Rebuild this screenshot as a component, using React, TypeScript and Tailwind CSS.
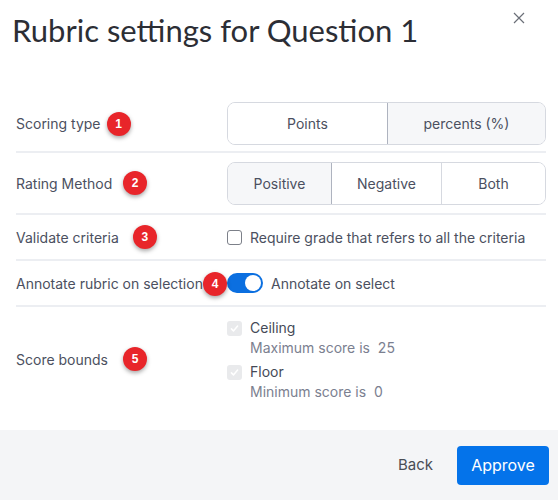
import React from "react";

function Badge({ n, className = "" }: { n: number; className?: string }) {
  return (
    <span
      className={`inline-flex h-[24px] w-[24px] items-center justify-center rounded-full bg-[#e8252a] text-[12px] font-bold text-white shadow-[0_2px_4px_rgba(0,0,0,0.35)] ${className}`}
      style={{ fontFamily: "'Liberation Sans', Arial, sans-serif" }}
    >
      {n}
    </span>
  );
}

function CheckIcon() {
  return (
    <svg viewBox="0 0 16 16" className="h-[11px] w-[11px]" fill="none" stroke="white" strokeWidth="2.2" strokeLinecap="round" strokeLinejoin="round">
      <path d="M3.5 8.5l3 3 6-7" />
    </svg>
  );
}

export default function App() {
  return (
    <div className="relative h-[500px] w-[558px] bg-white" style={{ fontFamily: "Inter, 'Noto Sans', sans-serif" }}>
      <div className="px-3 pt-[10px]">
        <h1 className="text-[31px] leading-[40px] text-[#2c2e35]" style={{ fontFamily: "Lato, Inter, sans-serif" }}>
          Rubric settings for Question 1
        </h1>
      </div>
      <button className="absolute right-[33px] top-[12px] text-[#6b6f78]" aria-label="close">
        <svg viewBox="0 0 12 12" className="h-[12px] w-[12px]" stroke="currentColor" strokeWidth="1.2">
          <path d="M1 1l10 10M11 1L1 11" />
        </svg>
      </button>

      <div className="mt-[46px] pl-4 pr-3 text-[14px] text-[#4b5060]">
        {/* Row 1 */}
        <div className="flex h-[57px] items-center border-b-2 border-[#eceef2]">
          <div className="flex w-[211px] items-center">
            <span>Scoring type</span>
            <Badge n={1} className="ml-[6px]" />
          </div>
          <div className="flex h-[43px] flex-1 overflow-hidden rounded-[8px] border border-[#d6d9e0]">
            <div className="flex w-[159px] items-center justify-center bg-white">Points</div>
            <div className="flex flex-1 items-center justify-center border-l border-[#aeb3bf] bg-[#f6f7f9]">percents (%)</div>
          </div>
        </div>
        {/* Row 2 */}
        <div className="flex h-[62px] items-center border-b-2 border-[#eceef2]">
          <div className="flex w-[211px] items-center">
            <span>Rating Method</span>
            <Badge n={2} className="ml-[11px]" />
          </div>
          <div className="flex h-[43px] flex-1 overflow-hidden rounded-[8px] border border-[#d6d9e0]">
            <div className="flex w-[104px] items-center justify-center border-r border-[#aeb3bf] bg-[#f6f7f9]">Positive</div>
            <div className="flex w-[110px] items-center justify-center border-r border-[#d6d9e0] bg-white">Negative</div>
            <div className="flex flex-1 items-center justify-center bg-white">Both</div>
          </div>
        </div>
        {/* Row 3 */}
        <div className="flex h-[46px] items-center border-b-2 border-[#eceef2]">
          <div className="flex w-[211px] items-center">
            <span>Validate criteria</span>
            <Badge n={3} className="ml-[14px]" />
          </div>
          <div className="flex items-center gap-[8px]">
            <span className="h-[15px] w-[15px] rounded-[3px] border border-[#7c8089] bg-white" />
            <span>Require grade that refers to all the criteria</span>
          </div>
        </div>
        {/* Row 4 */}
        <div className="relative flex h-[46px] items-center border-b-2 border-[#eceef2]">
          <div className="flex w-[211px] items-center">
            <span>Annotate rubric on selection</span>
          </div>
          <div className="flex items-center gap-[8px]">
            <span className="relative flex h-[20px] w-[36px] items-center rounded-full bg-[#0b6fe0]">
              <span className="absolute right-[2px] h-[16px] w-[16px] rounded-full bg-white" />
            </span>
            <span>Annotate on select</span>
          </div>
          <Badge n={4} className="absolute left-[187px] top-[11px]" />
        </div>
        {/* Row 5 */}
        <div className="flex h-[104px] items-center">
          <div className="flex w-[211px] items-center">
            <span>Score bounds</span>
            <Badge n={5} className="ml-[15px]" />
          </div>
          <div className="flex flex-col gap-[4px] pt-[2px]">
            <div className="flex gap-[8px]">
              <span className="mt-[3px] flex h-[15px] w-[15px] items-center justify-center rounded-[3px] bg-[#e9eaec]">
                <CheckIcon />
              </span>
              <div className="flex flex-col leading-[20px]">
                <span className="text-[#454a57]">Ceiling</span>
                <span className="text-[#7b8090]">Maximum score is&nbsp; 25</span>
              </div>
            </div>
            <div className="flex gap-[8px]">
              <span className="mt-[3px] flex h-[15px] w-[15px] items-center justify-center rounded-[3px] bg-[#e9eaec]">
                <CheckIcon />
              </span>
              <div className="flex flex-col leading-[20px]">
                <span className="text-[#454a57]">Floor</span>
                <span className="text-[#7b8090]">Minimum score is&nbsp; 0</span>
              </div>
            </div>
          </div>
        </div>
      </div>

      {/* Footer */}
      <div className="absolute bottom-0 left-0 right-0 flex h-[70px] items-center justify-end gap-[24px] bg-[#f4f5f7] pr-[9px]">
        <button className="text-[15px] text-[#4a4d55]">Back</button>
        <button className="h-[39px] w-[92px] rounded-[4px] bg-[#0473ea] text-[16px] text-white">Approve</button>
      </div>
    </div>
  );
}
